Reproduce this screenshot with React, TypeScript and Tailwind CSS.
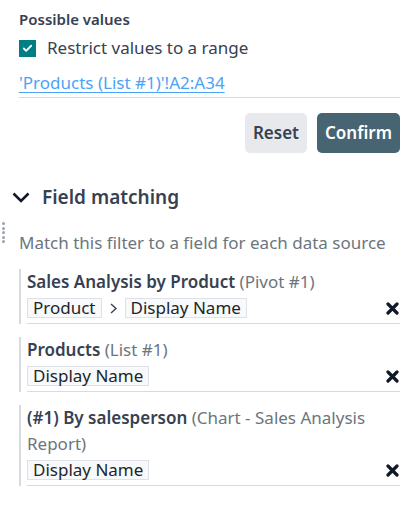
import { Check } from 'lucide-react';

type Source = {
  title: string;
  kind: string;
  path: string[];
};

const sources: Source[] = [
  { title: 'Sales Analysis by Product', kind: '(Pivot #1)', path: ['Product', 'Display Name'] },
  { title: 'Products', kind: '(List #1)', path: ['Display Name'] },
  { title: '(#1) By salesperson', kind: '(Chart - Sales Analysis Report)', path: ['Display Name'] },
];

function Tag({ label }: { label: string }) {
  return (
    <span className="border border-[#dee2e6] bg-[#f8f9fa] px-[5px] leading-[18px] text-[#212529]">
      {label}
    </span>
  );
}

function RemoveIcon() {
  return (
    <svg width="13" height="13" viewBox="0 0 13 13" className="mr-[1px] shrink-0">
      <path d="M2 2 L11 11 M11 2 L2 11" stroke="#111827" strokeWidth="3.2" strokeLinecap="round" />
    </svg>
  );
}

function SourceRow({ source }: { source: Source }) {
  return (
    <div className="border-l-[2px] border-[#d8dadd] pl-[6px]">
      <div className="leading-[26px]">
        <span className="font-semibold text-[#374151]">{source.title}</span>{' '}
        <span className="text-[#6c757d]">{source.kind}</span>
      </div>
      <div className="mt-[3px] flex items-center border-b border-[#d8dadd] pb-[5px]">
        <div className="flex flex-1 items-center">
          {source.path.map((p, i) => (
            <span key={p} className="flex items-center">
              {i > 0 && (
                <svg width="23" height="12" viewBox="0 0 23 12" className="shrink-0">
                  <path d="M9 2 L14 6.5 L9 11" fill="none" stroke="#374151" strokeWidth="1.4" />
                </svg>
              )}
              <Tag label={p} />
            </span>
          ))}
        </div>
        <RemoveIcon />
      </div>
    </div>
  );
}

export default function App() {
  return (
    <div
      className="h-[507px] w-[417px] overflow-hidden bg-white text-[17px] text-[#374151]"
      style={{ fontFamily: '"Noto Sans", "Open Sans", sans-serif' }}
    >
      <div className="pl-[19px] pr-[17px] pt-[8px]">
        <div className="text-[15px] font-semibold leading-[22px]">Possible values</div>
        <label className="mt-[6px] flex items-center gap-[11px] leading-[24px]">
          <span className="flex h-[17px] w-[17px] items-center justify-center bg-[#017e84]">
            <Check className="h-[11px] w-[11px] text-white" strokeWidth={4} />
          </span>
          Restrict values to a range
        </label>
        <div className="mt-[11px] border-b border-[#d8dadd] pb-[2px] leading-[24px]">
          <a className="text-[#4aa3f7] underline underline-offset-[3px]">'Products (List #1)'!A2:A34</a>
        </div>
        <div className="mt-[15px] flex justify-end gap-[10px]">
          <button className="h-[40px] rounded-[5px] bg-[#e7e9ed] px-[8px] font-semibold text-[#374151]">
            Reset
          </button>
          <button className="h-[40px] rounded-[5px] bg-[#466471] px-[8px] font-semibold text-white">
            Confirm
          </button>
        </div>
      </div>

      <div className="relative mt-[31px]">
        <div className="flex items-center gap-[12px] pl-[12px]">
          <svg width="18" height="11" viewBox="0 0 18 11" className="shrink-0">
            <path d="M1.5 1.5 L9 9 L16.5 1.5" fill="none" stroke="#111827" strokeWidth="2.6" />
          </svg>
          <span className="text-[19px] font-semibold leading-[26px]">Field matching</span>
        </div>
        <div className="absolute left-[2px] top-[38px] flex flex-col gap-[1.5px]">
          {[0, 1, 2, 3, 4].map((d) => (
            <span key={d} className="h-[3px] w-[3px] rounded-full bg-[#9ca3af]" />
          ))}
        </div>
        <div className="pl-[19px] pr-[17px]">
          <div className="mt-[21px] leading-[24px] text-[#6c757d]">
            Match this filter to a field for each data source
          </div>
          <div className="mt-[14px] flex flex-col gap-[13px]">
            {sources.map((s) => (
              <SourceRow key={s.title} source={s} />
            ))}
          </div>
        </div>
      </div>
    </div>
  );
}
